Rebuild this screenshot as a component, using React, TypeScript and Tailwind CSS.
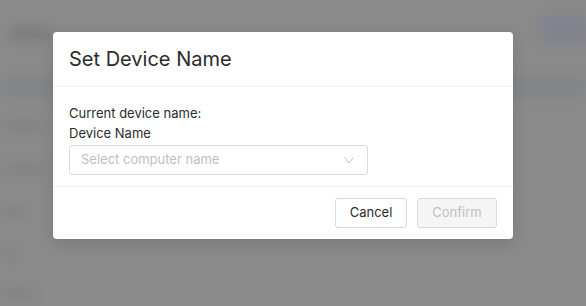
import React from "react";

export default function App() {
  return (
    <div
      className="relative w-[586px] h-[306px] overflow-hidden bg-[#8a8a8a]"
      style={{ fontFamily: "Inter, 'Noto Sans', sans-serif" }}
    >
      {/* blurred underlying page */}
      <div className="absolute inset-0 blur-[6px] opacity-60">
        <div className="absolute left-[10px] top-[28px] w-[40px] h-[12px] rounded bg-[#6f6f6f]" />
        <div className="absolute left-0 top-[78px] w-[586px] h-[18px] bg-[#7c8088]" />
        <div className="absolute left-[4px] top-[122px] w-[40px] h-[8px] bg-[#7a7a7a]" />
        <div className="absolute left-[4px] top-[165px] w-[40px] h-[8px] bg-[#7a7a7a]" />
        <div className="absolute left-[4px] top-[208px] w-[20px] h-[8px] bg-[#7a7a7a]" />
        <div className="absolute left-[4px] top-[250px] w-[12px] h-[8px] bg-[#7a7a7a]" />
        <div className="absolute left-[4px] top-[290px] w-[30px] h-[8px] bg-[#7a7a7a]" />
        <div className="absolute left-[540px] top-[14px] w-[50px] h-[32px] rounded bg-[#7e7e92]" />
      </div>

      <div className="absolute left-[53px] top-[32px] w-[460px] bg-white rounded-[4px] shadow-[0_4px_16px_rgba(0,0,0,0.12)] flex flex-col">
        <div className="h-[55px] flex items-center px-4 border-b border-[#f0f0f0]">
          <span className="text-[20px] text-[#2b2b2b] leading-none">Set Device Name</span>
        </div>
        <div className="px-4 pt-[16px] pb-[11px] border-b border-[#f0f0f0] flex flex-col">
          <div className="text-[13px] leading-[20px] text-[#2b2b2b]">Current device name:</div>
          <div className="text-[13px] leading-[20px] text-[#2b2b2b]">Device Name</div>
          <div className="mt-[2px] w-[299px] h-[30px] border border-[#d9d9d9] rounded-[3px] flex items-center justify-between pl-[11px] pr-[12px]">
            <span className="text-[13px] text-[#bfbfbf]">Select computer name</span>
            <svg width="12" height="12" viewBox="0 0 12 12" fill="none">
              <path d="M1.5 3.5 L6 9 L10.5 3.5" stroke="#c4c4c4" strokeWidth="1" />
            </svg>
          </div>
        </div>
        <div className="h-[52px] flex items-center justify-end gap-[10px] px-4">
          <button className="w-[72px] h-[30px] border border-[#d9d9d9] rounded-[3px] text-[13px] text-[#2b2b2b] bg-white">
            Cancel
          </button>
          <button className="w-[80px] h-[30px] border border-[#d9d9d9] rounded-[3px] text-[13px] text-[#bfbfbf] bg-[#f5f5f5]">
            Confirm
          </button>
        </div>
      </div>
    </div>
  );
}
